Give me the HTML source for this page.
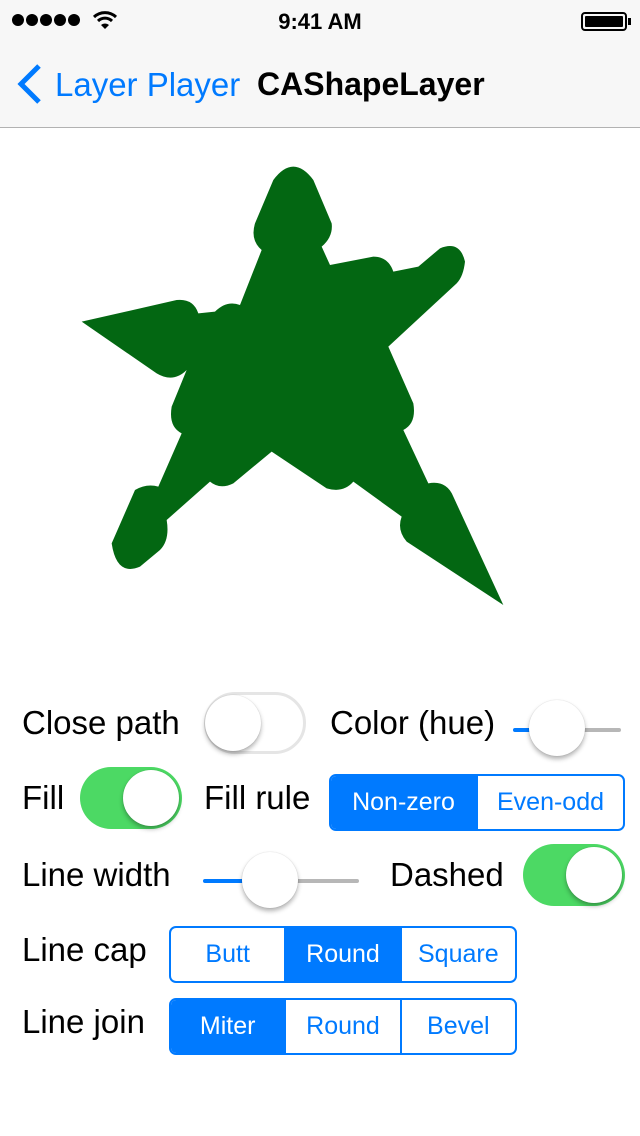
<!DOCTYPE html>
<html><head><meta charset="utf-8"><style>
*{margin:0;padding:0;box-sizing:border-box}
body{width:640px;height:1136px;background:#fff;font-family:"Liberation Sans",Arial,sans-serif;position:relative;overflow:hidden}
.a{position:absolute}
.lbl{position:absolute;font-size:33px;color:#000;line-height:36px}
.sw{position:absolute;width:102px;height:62px;border-radius:31px}
.sw.off{border:3px solid #e5e5e5;background:#fff}
.sw.on{background:#4cd964}
.knob{position:absolute;width:56px;height:56px;border-radius:50%;background:#fff;box-shadow:0 3px 5px rgba(0,0,0,.3),0 0 1px rgba(0,0,0,.2)}
.seg{position:absolute;border:2px solid #007aff;border-radius:7px;display:flex;overflow:hidden}
.seg div{flex:1;color:#007aff;font-size:25px;display:flex;align-items:center;justify-content:center;border-left:2px solid #007aff}
.seg div:first-child{border-left:none}
.seg div.s{background:#007aff;color:#fff}
.trk{position:absolute;height:4px;border-radius:2px}
</style></head><body>
<div class="a" style="left:0;top:0;width:640px;height:128px;background:#f7f7f7;border-bottom:1px solid #b2b2b2"></div>
<svg class="a" style="left:10px;top:12px" width="72" height="16" viewBox="0 0 72 16"><circle cx="8" cy="8" r="6"/><circle cx="22" cy="8" r="6"/><circle cx="36" cy="8" r="6"/><circle cx="50" cy="8" r="6"/><circle cx="64" cy="8" r="6"/></svg>
<svg class="a" style="left:92px;top:9px" width="26" height="22" viewBox="0 0 26 22"><path d="M2 8 A16 16 0 0 1 24 8" stroke="#000" stroke-width="3" fill="none"/><path d="M6 12 A10 10 0 0 1 20 12" stroke="#000" stroke-width="3" fill="none"/><path d="M13 20 L9 16 A6 6 0 0 1 17 16Z" fill="#000"/></svg>
<div class="a" style="left:0;width:640px;top:9px;text-align:center;font-size:22px;font-weight:bold">9:41 AM</div>
<div class="a" style="left:581px;top:12px;width:46px;height:19px;border:2px solid #000;border-radius:4px;padding:2px"><div style="background:#000;width:100%;height:100%;border-radius:1px"></div></div>
<div class="a" style="left:628px;top:18px;width:3px;height:7px;background:#000"></div>
<svg class="a" style="left:14px;top:63px" width="30" height="42" viewBox="0 0 30 42"><path d="M25 3 L7 21 L25 39" stroke="#007aff" stroke-width="5" fill="none"/></svg>
<div class="a" style="left:55px;top:66px;font-size:33px;color:#007aff">Layer Player</div>
<div class="a" style="left:257px;top:66px;font-size:32px;font-weight:bold">CAShapeLayer</div>
<svg class="a" style="left:0;top:0" width="640" height="640"><g transform="translate(60,150) scale(0.33333)"><path fill="#036712" d="M640 90 Q700 10 760 90 L815 220 Q820 260 785 290 L810 345 L940 320 Q985 320 1000 365 L1075 350 L1140 295 Q1200 270 1215 335 Q1210 380 1190 400 L985 590 L1060 760 Q1070 820 1030 840 L1105 1000 Q1160 990 1180 1040 L1330 1365 L1040 1175 Q1010 1140 1025 1100 L880 995 Q850 1030 800 1015 L635 905 L520 1000 Q480 1020 450 995 L320 1110 Q330 1170 300 1200 L240 1250 Q170 1280 155 1180 L225 1020 Q260 1000 295 1010 L365 850 Q325 830 335 770 L380 660 Q340 700 290 670 L65 515 L350 450 Q400 445 415 490 L465 485 Q500 450 540 465 L605 300 Q570 270 585 220 Z"/></g></svg>
<div class="lbl" style="left:22px;top:705px">Close path</div>
<div class="sw off" style="left:204px;top:692px"><div class="knob" style="left:-2px;top:0px"></div></div>
<div class="lbl" style="left:330px;top:705px">Color (hue)</div>
<div class="trk" style="left:513px;top:728px;width:20px;background:#007aff"></div>
<div class="trk" style="left:580px;top:728px;width:41px;background:#b7b7b7"></div>
<div class="knob" style="left:529px;top:700px"></div>
<div class="lbl" style="left:22px;top:780px">Fill</div>
<div class="sw on" style="left:80px;top:767px"><div class="knob" style="left:43px;top:3px"></div></div>
<div class="lbl" style="left:204px;top:780px">Fill rule</div>
<div class="seg" style="left:329px;top:774px;width:296px;height:57px"><div class="s">Non-zero</div><div>Even-odd</div></div>
<div class="lbl" style="left:22px;top:857px">Line width</div>
<div class="trk" style="left:203px;top:879px;width:45px;background:#007aff"></div>
<div class="trk" style="left:290px;top:879px;width:69px;background:#b7b7b7"></div>
<div class="knob" style="left:242px;top:852px"></div>
<div class="lbl" style="left:390px;top:857px">Dashed</div>
<div class="sw on" style="left:523px;top:844px"><div class="knob" style="left:43px;top:3px"></div></div>
<div class="lbl" style="left:22px;top:932px">Line cap</div>
<div class="seg" style="left:169px;top:926px;width:348px;height:57px"><div>Butt</div><div class="s">Round</div><div>Square</div></div>
<div class="lbl" style="left:22px;top:1004px">Line join</div>
<div class="seg" style="left:169px;top:998px;width:348px;height:57px"><div class="s">Miter</div><div>Round</div><div>Bevel</div></div>
</body></html>
